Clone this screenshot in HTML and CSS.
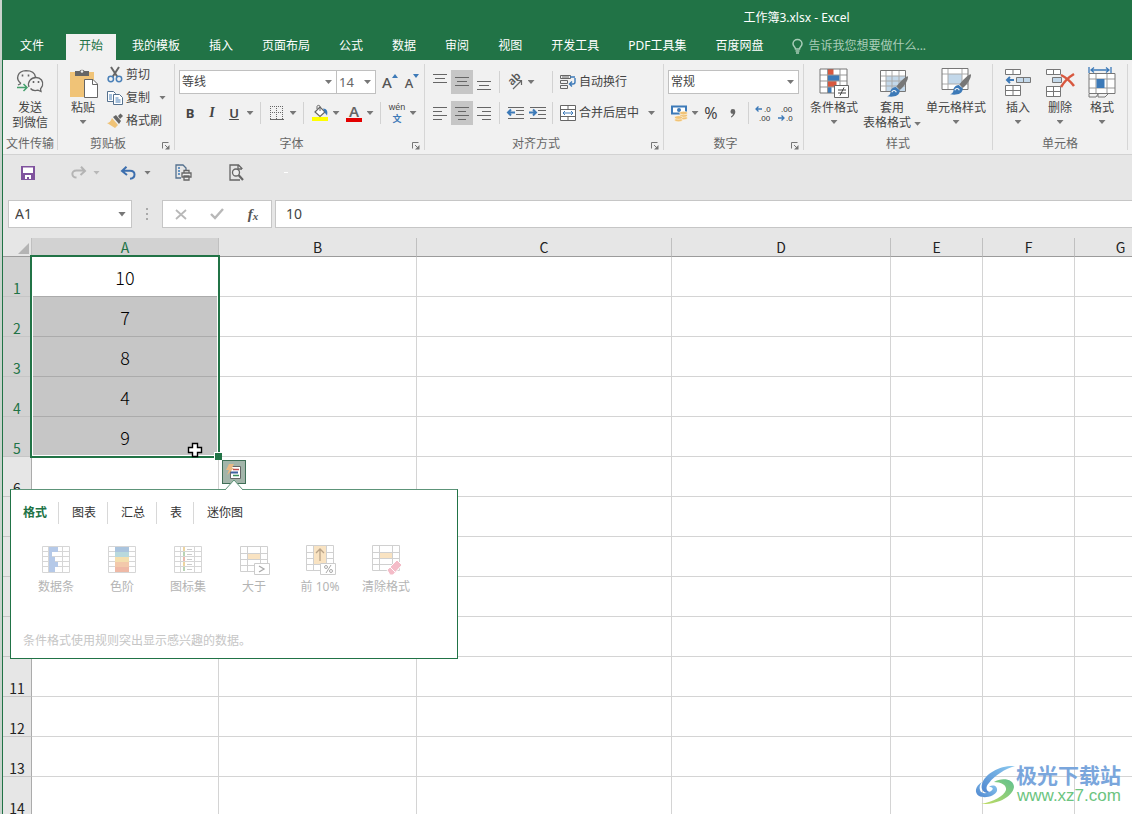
FILE: index.html
```html
<!DOCTYPE html>
<html lang="zh-CN">
<head>
<meta charset="utf-8">
<title>工作簿3.xlsx - Excel</title>
<link rel="stylesheet" href="styles.css">
</head>
<body>
<svg class="defs" aria-hidden="true">
  <symbol id="launcher" viewBox="0 0 8 8"><path d="M.5 6.500V.5H6.500M3 3l3 3" fill="none" stroke="#777"/><path d="M7.500 3v4.500H3z" fill="#777"/></symbol>
  <symbol id="brush" viewBox="0 0 20 20"><path d="M19 1c1 2-3 9-7 12l-3-3C12 6 17 1 19 1z" fill="#777"/><path d="M8.500 10.500l3.500 3c0 5-6 6-11 5 3-1 3-3 3-5 1-2 3-3 4.500-3z" fill="#3d7ab8"/><path d="M5 15c1-2 3-2 4 0" stroke="#fff" fill="none"/></symbol>
</svg>
<div class="app">
  <header class="titlebar"><h1>工作簿3.xlsx - Excel</h1></header>
  <nav class="tabs">
    <button class="file">文件</button>
    <button class="active">开始</button>
    <button>我的模板</button>
    <button>插入</button>
    <button>页面布局</button>
    <button>公式</button>
    <button>数据</button>
    <button>审阅</button>
    <button>视图</button>
    <button>开发工具</button>
    <button>PDF工具集</button>
    <button>百度网盘</button>
    <button class="tell"><svg width="11" height="15" viewBox="0 0 11 15" fill="none" stroke="#a9cdb8" stroke-width="1.500"><path d="M3.500 10C3.500 8 1 7.500 1 4.800a4.400 4.200 0 0 1 9 0C10 7.500 7.500 8 7.500 10zM3.500 12h4M4 14h3"/></svg>告诉我您想要做什么...</button>
  </nav>

  <section class="ribbon">
    <div class="group g-send">
      <div class="body">
        <button class="big">
          <svg width="28" height="30" viewBox="0 0 28 30" fill="none" stroke="#666" stroke-width="1.300"><path d="M5 15.500C-1 11 1.500 3 10 2.700c6 0 9 3 9.500 6.500M2 17l3-1.500"/><path d="M13 19c-2-5 2-9.500 7-9.500s7.500 4 6.500 8c-.5 1.500-1.500 2.500-2 3.300l.5 2.700-3-1.300c-3 .7-6 .3-7.500-1.700"/><path d="M6.500 6.500v2M12.500 6.500v2M17.500 13v2M22.500 13v2" stroke-width="1.600"/><path d="M1 19.500h10M7.500 16l3.500 3.500L7.500 23" stroke="#45a06c" stroke-width="1.500"/></svg>
          <span>发送</span><span>到微信</span>
        </button>
      </div>
      <div class="caption">文件传输</div>
    </div>
    <i class="divider"></i>

    <div class="group g-clip">
      <div class="body">
        <button class="big">
          <svg width="30" height="30" viewBox="0 0 30 30"><path d="M2 4h24v25H2z" fill="#f0c377"/><path d="M7 3h4.500a3 3 0 0 1 5 0H21v5H7z" fill="#666"/><circle cx="14" cy="3.500" r="1.300" fill="#f1f1f1"/><path d="M16.500 11.500h8.500l4.500 4.500v13.500h-13z" fill="#fff" stroke="#666"/><path d="M24.500 11.500v5h5" fill="none" stroke="#666"/></svg>
          <span>粘贴</span><i class="caret"></i>
        </button>
        <div class="stack">
          <button class="small"><svg width="16" height="16" viewBox="0 0 16 16" fill="none"><path d="M4 0l6.500 10M12 0L5.500 10" stroke="#666" stroke-width="2"/><circle cx="3.800" cy="12" r="2.700" stroke="#4a80b8" stroke-width="1.500"/><circle cx="12" cy="12" r="2.700" stroke="#4a80b8" stroke-width="1.500"/></svg>剪切</button>
          <button class="small"><svg width="16" height="16" viewBox="0 0 16 16"><g fill="#fff" stroke="#55718e"><path d="M.5 1.500h6l2 2v8h-8z"/><path d="M6.500 4.500h6l3 3v7h-9z"/></g><path d="M2 5h3M2 7h3M2 9h3M8.500 8h3M8.500 10h5M8.500 12h5" stroke="#4a80b8"/></svg>复制<i class="caret far"></i></button>
          <button class="small"><svg width="16" height="16" viewBox="0 0 16 16"><path d="M11 3l2.500-2.500L16 3l-3 3z" fill="#666"/><path d="M6 4l3-2 5 6-2 3z" fill="#666"/><path d="M5 5l6 7-3 3-8-5c2 0 4-2 5-5z" fill="#f0c377"/></svg>格式刷</button>
        </div>
      </div>
      <div class="caption">剪贴板</div>
      <button class="launch" aria-label="剪贴板选项"><svg width="8" height="8"><use href="#launcher"/></svg></button>
    </div>
    <i class="divider"></i>

    <div class="group g-font">
      <div class="body rows">
        <div class="row">
          <label class="combo font"><select aria-label="字体"><option>等线</option></select><i class="caret"></i></label>
          <label class="combo size"><select aria-label="字号"><option>14</option></select><i class="caret"></i></label>
          <button class="tool grow" aria-label="增大字号"><span class="biga">A</span><svg width="6" height="4"><path d="M0 4l3-4 3 4z" fill="#3d7ab8"/></svg></button>
          <button class="tool grow" aria-label="减小字号"><span class="smalla">A</span><svg width="6" height="4"><path d="M0 0l3 4 3-4z" fill="#3d7ab8"/></svg></button>
        </div>
        <div class="row">
          <button class="tool"><b>B</b></button>
          <button class="tool"><em>I</em></button>
          <button class="tool"><u>U</u></button>
          <button class="drop" aria-label="下划线"><i class="caret"></i></button>
          <i class="bar"></i>
          <button class="tool" aria-label="边框"><svg width="14" height="14" viewBox="0 0 14 14" fill="none" stroke="#666"><path d="M0 .5h14M0 6.500h14M.5 0v13M6.500 0v13M12.500 0v13" stroke-dasharray="1 1"/><path d="M0 13.500h14"/></svg></button>
          <button class="drop" aria-label="边框选项"><i class="caret"></i></button>
          <i class="bar"></i>
          <button class="tool" aria-label="填充颜色"><svg width="16" height="16" viewBox="0 0 16 16"><path d="M0 12h16v4H0z" fill="#ff0"/><path d="M3 7l5-5 5 5-5 4.500z" fill="#fff" stroke="#666" stroke-width="1.200"/><path d="M5 4V1.500C5 0 8 0 8 1.500V6" stroke="#666" fill="none"/><path d="M11 3.500c4 0 5 3 4 7l-2-2.500z" fill="#3d7ab8"/></svg></button>
          <button class="drop" aria-label="填充颜色选项"><i class="caret"></i></button>
          <button class="tool color" aria-label="字体颜色"><span>A</span></button>
          <button class="drop" aria-label="字体颜色选项"><i class="caret"></i></button>
          <i class="bar"></i>
          <button class="tool pinyin"><span>wén</span><strong>文</strong></button>
          <button class="drop" aria-label="拼音选项"><i class="caret"></i></button>
        </div>
      </div>
      <div class="caption">字体</div>
      <button class="launch" aria-label="字体选项"><svg width="8" height="8"><use href="#launcher"/></svg></button>
    </div>
    <i class="divider"></i>

    <div class="group g-align">
      <div class="body rows">
        <div class="row">
          <button class="tool" aria-label="顶端对齐"><svg width="14" height="18" stroke="#666"><path d="M0 1.500h14M2 5.500h10M0 9.500h14"/></svg></button>
          <button class="tool on" aria-label="垂直居中"><svg width="14" height="18" stroke="#666"><path d="M0 4.500h14M2 8.500h10M0 12.500h14"/></svg></button>
          <button class="tool" aria-label="底端对齐"><svg width="14" height="18" stroke="#666"><path d="M0 8.500h14M2 12.500h10M0 16.500h14"/></svg></button>
          <i class="bar"></i>
          <button class="tool" aria-label="方向"><svg width="18" height="18" viewBox="0 0 18 18"><text class="orient" transform="translate(6 13) rotate(-45)">ab</text><path d="M7 16l8-8M11 7.500h4.500V12" fill="none" stroke="#666" stroke-width="1.200"/></svg></button>
          <button class="drop" aria-label="方向选项"><i class="caret"></i></button>
          <i class="bar late"></i>
          <button class="small"><svg width="16" height="16" viewBox="0 0 16 16" fill="none" stroke="#666"><path d="M.5 1.500h10v3H.5zM.5 6.500h7v3h-7zM.5 11.500h7v3h-7zM2 3h7"/><path d="M10 3h5M15 4v4q0 2-2 2h-3M12 7.500L9.500 10l2.500 2.500" stroke="#3d7ab8" stroke-width="1.400"/></svg>自动换行</button>
        </div>
        <div class="row">
          <button class="tool" aria-label="左对齐"><svg width="14" height="14" stroke="#666"><path d="M0 1.500h14M0 5.500h9M0 9.500h14M0 13.500h9"/></svg></button>
          <button class="tool on" aria-label="居中"><svg width="14" height="14" stroke="#666"><path d="M0 1.500h14M3 5.500h8M0 9.500h14M3 13.500h8"/></svg></button>
          <button class="tool" aria-label="右对齐"><svg width="14" height="14" stroke="#666"><path d="M0 1.500h14M5 5.500h9M0 9.500h14M5 13.500h9"/></svg></button>
          <i class="bar"></i>
          <button class="tool" aria-label="减少缩进"><svg width="17" height="14" fill="none" stroke="#666"><path d="M1 1.500h16M9 4.500h8M9 8.500h8M1 12.500h16"/><path d="M8 6.500H1M4 3.500L1 6.500l3 3" stroke="#3d7ab8" stroke-width="2"/></svg></button>
          <button class="tool" aria-label="增加缩进"><svg width="17" height="14" fill="none" stroke="#666"><path d="M1 1.500h16M9 4.500h8M9 8.500h8M1 12.500h16"/><path d="M0 6.500h7M4 3.500l3 3-3 3" stroke="#3d7ab8" stroke-width="2"/></svg></button>
          <i class="bar"></i>
          <button class="small"><svg width="16" height="16" viewBox="0 0 16 16" fill="#fff" stroke="#666"><path d="M.5.5h15v15H.5zM.5 4.500h15M.5 11.500h15M8 .5v4M8 11.500v4"/><path d="M3 8h10M5 6L3 8l2 2M11 6l2 2-2 2" fill="none" stroke="#3d7ab8"/></svg>合并后居中<i class="caret far"></i></button>
        </div>
      </div>
      <div class="caption">对齐方式</div>
      <button class="launch" aria-label="对齐选项"><svg width="8" height="8"><use href="#launcher"/></svg></button>
    </div>
    <i class="divider"></i>

    <div class="group g-num">
      <div class="body rows">
        <div class="row">
          <label class="combo wide"><select aria-label="数字格式"><option>常规</option></select><i class="caret"></i></label>
        </div>
        <div class="row">
          <button class="tool" aria-label="会计格式"><svg width="17" height="17" viewBox="0 0 17 17"><path d="M1 1.500h14v7H1z" fill="#fff" stroke="#3d7ab8" stroke-width="2"/><circle cx="8" cy="5" r="2" fill="#3d7ab8"/><g fill="#f0c377" stroke="#fff" stroke-width=".5"><ellipse cx="12.500" cy="13" rx="4" ry="1.800"/><ellipse cx="12.500" cy="10.500" rx="4" ry="1.800"/><ellipse cx="12.500" cy="8" rx="4" ry="1.800"/><ellipse cx="7.500" cy="15" rx="4" ry="1.800"/><ellipse cx="7.500" cy="12.500" rx="4" ry="1.800"/></g></svg></button>
          <button class="drop" aria-label="会计格式选项"><i class="caret"></i></button>
          <button class="tool pct">%</button>
          <button class="tool" aria-label="千位分隔"><svg width="6" height="9" viewBox="0 0 6 9"><path d="M.5 2.500a2.200 2.200 0 0 1 4.800 0C5.500 5 3 8 1 8.500V7.500C2.500 6.500 3 5.500 3 4.800 1.500 5 .5 4 .5 2.500z" fill="#666"/></svg></button>
          <i class="bar"></i>
          <button class="tool" aria-label="增加小数位"><svg class="dec" width="18" height="18" viewBox="0 0 18 18"><text x="9" y="8">.0</text><text x="4" y="17">.00</text><path d="M7 5H1M3.500 2.500L1 5l2.500 2.500"/></svg></button>
          <button class="tool" aria-label="减少小数位"><svg class="dec" width="18" height="18" viewBox="0 0 18 18"><text x="4" y="8">.00</text><text x="9" y="17">.0</text><path d="M1 14h6M4.500 11.500L7 14l-2.500 2.500"/></svg></button>
        </div>
      </div>
      <div class="caption">数字</div>
      <button class="launch" aria-label="数字选项"><svg width="8" height="8"><use href="#launcher"/></svg></button>
    </div>
    <i class="divider"></i>

    <div class="group g-style">
      <div class="body">
        <button class="big">
          <svg width="30" height="30" viewBox="0 0 30 30"><path d="M1 1h27v24H1z" fill="#fff"/><path d="M8.500 1h6v6h-6z" fill="#d8583f"/><path d="M8.500 7h12v6h-12z" fill="#3d7ab8"/><path d="M8.500 13h9v6h-9z" fill="#d8583f"/><path d="M8.500 19h4v6h-4z" fill="#3d7ab8"/><path d="M1 7h27M1 13h27M1 19h27M8.500 1v24M21 1v24" stroke="#999" fill="none"/><path d="M1 1h27v24H1z" fill="none" stroke="#777"/><path d="M15.500 17.500h14v12h-14z" fill="#fff" stroke="#666"/><path d="M19 22h8M19 25h8M25 19.500l-4 8" stroke="#444" fill="none"/></svg>
          <span>条件格式</span><i class="caret"></i>
        </button>
        <button class="big mid">
          <svg width="30" height="32" viewBox="0 0 30 32"><path d="M3.500 3.500h25v21h-25z" fill="#fff"/><path d="M9 9h19v15H9z" fill="#c3d8ea"/><path d="M3 9h25M3 14h25M3 19h25M9 3v21M15 3v21M22 3v21" stroke="#aaa"/><path d="M3.500 3.500h25v21h-25z" fill="none" stroke="#777"/><use href="#brush" x="9" y="8" width="23" height="23"/></svg>
          <span>套用</span><span>表格格式<i class="caret"></i></span>
        </button>
        <button class="big wide">
          <svg width="30" height="32" viewBox="0 0 30 32"><path d="M1 1.500h26v21H1z" fill="#fff"/><path d="M7 7h14v10H7z" fill="#c3d8ea"/><path d="M1 7h26M1 17h26M7 1v21M21 1v21" stroke="#aaa"/><path d="M1 1.500h26v21H1z" fill="none" stroke="#777"/><use href="#brush" x="8" y="6" width="23" height="23"/></svg>
          <span>单元格样式</span><i class="caret"></i>
        </button>
      </div>
      <div class="caption">样式</div>
    </div>
    <i class="divider"></i>

    <div class="group g-cell">
      <div class="body">
        <button class="big">
          <svg width="28" height="30" viewBox="0 0 28 30" fill="#fff" stroke="#777"><path d="M1.500 1.500h15v5h-15zM9 1.500v5M1.500 17.500h15v10h-15zM9 17.500v10M1.500 22.500h15"/><path d="M12.500 9.500h14v5h-14zM19.500 9.500v5" fill="#c3d8ea"/><path d="M10 12H3M6 9l-3 3 3 3" fill="none" stroke="#3d7ab8" stroke-width="2"/></svg>
          <span>插入</span><i class="caret"></i>
        </button>
        <button class="big">
          <svg width="30" height="30" viewBox="0 0 30 30" fill="#fff" stroke="#777"><path d="M1.500 1.500h14v5h-14zM8.500 1.500v5M1.500 18.500h14v10h-14zM8.500 18.500v10M1.500 23.500h14"/><path d="M7.500 9.500h9v5h-9z" fill="#c3d8ea"/><path d="M16 7c4 2 10 7 13 11M29 6c-5 3-10 8-13 13" fill="none" stroke="#d8583f" stroke-width="2.500"/></svg>
          <span>删除</span><i class="caret"></i>
        </button>
        <button class="big">
          <svg width="28" height="32" viewBox="0 0 28 32" fill="none"><path d="M1 0v6M23 0v6M3 3h18M6 .5L3 3l3 2.500M18 .5L21 3l-3 2.500" stroke="#3d7ab8" stroke-width="1.300"/><path d="M1 6.500h26v20H1z" fill="#fff"/><path d="M1 12h26M1 21h26M8 6v20M19 6v20" stroke="#999"/><path d="M1 6.500h26v20H1zM1 27v3h7l2-3M10 27v3h7l3-3" stroke="#777"/><path d="M8.500 12h8v9h-8z" fill="#3d7ab8"/></svg>
          <span>格式</span><i class="caret"></i>
        </button>
      </div>
      <div class="caption">单元格</div>
    </div>
    <i class="divider"></i>
  </section>

  <div class="quick">
    <button aria-label="保存"><svg width="14" height="14" viewBox="0 0 14 14"><path d="M0 0h14v14H0z" fill="#80539e"/><path d="M2 1.500h10V7H2zM4 9h6v4H8v-2H6v2H4z" fill="#fff"/></svg></button>
    <button class="redo" aria-label="重做"><svg width="15" height="13" viewBox="0 0 15 13" fill="none" stroke="#b4b4b4" stroke-width="2"><path d="M10 0.700L14 5l-4.500 4M14 4.500H5.500c-6 0-5 7 0 7"/></svg><i class="caret pale"></i></button>
    <button class="undo" aria-label="撤消"><svg width="15" height="14" viewBox="0 0 15 14" fill="none" stroke="#3d6fae" stroke-width="2"><path d="M5.500 .7L1 5l5 4M1.500 4.800H9c6 0 6 7.500 0 8"/></svg><i class="caret"></i></button>
    <button class="print" aria-label="快速打印"><svg width="17" height="17" viewBox="0 0 17 17" fill="none" stroke="#666" stroke-width="1.300"><path d="M6 14H1V1h7l3 3v2" stroke="#55718e"/><path d="M3 4h2M3 7h2M3 10h2" stroke="#3d7ab8"/><path d="M7 9h9v4H7zM9 9V6.500h5V9M9 12h5v4H9z" fill="#eee"/></svg></button>
    <button class="view" aria-label="打印预览"><svg width="15" height="17" viewBox="0 0 15 17" fill="none" stroke="#666" stroke-width="1.300"><path d="M13 5v-.5L9.500 1H1v15h10M9 1v4h4"/><circle cx="7" cy="8.500" r="3.500" fill="#eee"/><path d="M9.500 11l4.500 5" stroke-width="2.200"/></svg></button>
    <i class="dash"></i>
  </div>

  <div class="formula">
    <label class="name"><input aria-label="名称框" value="A1"><i class="caret"></i></label>
    <span class="dots"><i></i><i></i><i></i></span>
    <div class="entry">
      <button aria-label="取消"><svg width="12" height="11" stroke="#b8b8b8" stroke-width="1.800"><path d="M1 1l10 9M11 1L1 10"/></svg></button>
      <button aria-label="输入"><svg width="14" height="12" fill="none" stroke="#b8b8b8" stroke-width="2.400"><path d="M1 6l4 4L13 1"/></svg></button>
      <button class="fx"><span>f</span><sub>x</sub></button>
    </div>
    <input class="value" aria-label="编辑栏" value="10">
  </div>

  <main class="sheet">
    <table>
      <colgroup><col class="c-row"><col class="c-a"><col class="c-b"><col class="c-c"><col class="c-d"><col class="c-e"><col class="c-e"><col class="c-e"></colgroup>
      <thead><tr><th class="corner"><svg width="11" height="11"><path d="M11 0v11H0z" fill="#b4b4b4"/></svg></th><th class="sel">A</th><th>B</th><th>C</th><th>D</th><th>E</th><th>F</th><th>G</th></tr></thead>
      <tbody>
        <tr class="sel first"><th>1</th><td>10</td><td></td><td></td><td></td><td></td><td></td><td></td></tr>
        <tr class="sel"><th>2</th><td>7</td><td></td><td></td><td></td><td></td><td></td><td></td></tr>
        <tr class="sel"><th>3</th><td>8</td><td></td><td></td><td></td><td></td><td></td><td></td></tr>
        <tr class="sel"><th>4</th><td>4</td><td></td><td></td><td></td><td></td><td></td><td></td></tr>
        <tr class="sel"><th>5</th><td>9</td><td></td><td></td><td></td><td></td><td></td><td></td></tr>
        <tr><th>6</th><td></td><td></td><td></td><td></td><td></td><td></td><td></td></tr>
        <tr><th></th><td></td><td></td><td></td><td></td><td></td><td></td><td></td></tr>
        <tr><th></th><td></td><td></td><td></td><td></td><td></td><td></td><td></td></tr>
        <tr><th></th><td></td><td></td><td></td><td></td><td></td><td></td><td></td></tr>
        <tr><th></th><td></td><td></td><td></td><td></td><td></td><td></td><td></td></tr>
        <tr><th>11</th><td></td><td></td><td></td><td></td><td></td><td></td><td></td></tr>
        <tr><th>12</th><td></td><td></td><td></td><td></td><td></td><td></td><td></td></tr>
        <tr><th>13</th><td></td><td></td><td></td><td></td><td></td><td></td><td></td></tr>
        <tr><th>14</th><td></td><td></td><td></td><td></td><td></td><td></td><td></td></tr>
      </tbody>
    </table>
    <div class="selection"></div>
    <svg class="cursor" width="16" height="16" viewBox="0 0 16 16"><path d="M5.500 1.500h5v4h4v5h-4v4h-5v-4h-4v-5h4z" fill="#fff" stroke="#000" stroke-width="1.400"/></svg>
    <button class="analysis" aria-label="快速分析"><svg width="18" height="18" viewBox="0 0 18 18"><path d="M5.500 3.500h10v12h-10z" fill="#fff" stroke="#666"/><path d="M8 6.500h6" stroke="#c0504d" stroke-width="1.500"/><path d="M6 9.500h7" stroke="#3d5f9e" stroke-width="2"/><path d="M8 12.500h6" stroke="#3b8f5c" stroke-width="1.500"/><path d="M4 1h5L7 5h2l-7 7 2-5H1z" fill="#e9b985"/></svg></button>
    <section class="popup">
      <svg class="arrow" width="20" height="11" viewBox="0 0 20 11"><path d="M1 11L10 1l9 10" fill="#fff" stroke="#5d9479"/></svg>
      <nav><button class="active">格式</button><button>图表</button><button>汇总</button><button>表</button><button>迷你图</button></nav>
      <div class="choices">
        <button><svg width="32" height="32" viewBox="0 0 32 32"><path d="M2.500 3.500h27v26h-27zM2 8.500h27M2 13.500h27M2 18.500h27M2 23.500h27M8.500 3v26M22.500 3v26" fill="#fff" stroke="#d6d6d6"/><path d="M9 4h9v5H9zM9 9h3v5H9zM9 14h6v5H9zM9 19h9v5H9zM9 24h6v5H9z" fill="#b5c9e8"/></svg><span>数据条</span></button>
        <button><svg width="32" height="32" viewBox="0 0 32 32"><path d="M2.500 3.500h27v26h-27zM2 8.500h27M2 13.500h27M2 18.500h27M2 23.500h27" fill="#fff" stroke="#d6d6d6"/><path d="M9 4h14v5H9z" fill="#aac4de"/><path d="M9 9h14v5H9z" fill="#b9d9dd"/><path d="M9 14h14v5H9z" fill="#f4dfae"/><path d="M9 19h14v5H9z" fill="#f3c9ab"/><path d="M9 24h14v5H9z" fill="#efb9a6"/></svg><span>色阶</span></button>
        <button><svg width="32" height="32" viewBox="0 0 32 32"><path d="M2.500 3.500h27v26h-27zM2 8.500h27M2 13.500h27M2 18.500h27M2 23.500h27M8.500 3v26M22.500 3v26" fill="#fff" stroke="#d6d6d6"/><path d="M12 4v4M12 19v4" stroke="#eed49f" stroke-width="2"/><path d="M12 9v4M12 24v4" stroke="#b9d4b4" stroke-width="2"/><path d="M12 14v4" stroke="#ecb9ae" stroke-width="2"/><path d="M15 6.500h5M15 11.500h5M15 16.500h5M15 21.500h5M15 26.500h5" stroke="#ccc"/></svg><span>图标集</span></button>
        <button><svg width="32" height="32" viewBox="0 0 32 32"><path d="M2.500 3.500h27v25h-27zM2 10.500h27M2 16.500h27M2 22.500h27M9.500 3v25M22.500 3v25" fill="#fff" stroke="#d0d0d0"/><path d="M10 11h12v5H10z" fill="#f9e3c2"/><path d="M16.500 20.500h15v11h-15z" fill="#fff" stroke="#ccc"/><path d="M21 23l5 3-5 3" fill="none" stroke="#aaa" stroke-width="1.300"/></svg><span>大于</span></button>
        <button><svg width="32" height="32" viewBox="0 0 32 32"><path d="M2.500 2.500h27v25h-27zM2 9.500h27M2 15.500h27M2 21.500h27M9.500 2v25M22.500 2v25" fill="#fff" stroke="#d0d0d0"/><path d="M10 3h12v18H10z" fill="#f9e3c2"/><path d="M16 18V6M12 10l4-4 4 4" fill="none" stroke="#b9a489" stroke-width="1.300"/><path d="M16.500 20.500h15v11h-15z" fill="#fff" stroke="#ccc"/><path d="M27 22l-5 8" stroke="#aaa"/><circle cx="22" cy="24" r="1.500" fill="none" stroke="#aaa"/><circle cx="27" cy="28" r="1.500" fill="none" stroke="#aaa"/></svg><span>前 10%</span></button>
        <button><svg width="32" height="32" viewBox="0 0 32 32"><path d="M2.500 2.500h27v25h-27zM2 9.500h27M2 15.500h27M2 21.500h27M9.500 2v25M22.500 2v25" fill="#fff" stroke="#d0d0d0"/><path d="M10 10h12v5H10z" fill="#f9e3c2"/><path d="M17 27l10-10 5 5-9 10h-3z" fill="#f4bcc8" stroke="#fff"/><path d="M20 24l5 5" stroke="#fff"/></svg><span>清除格式</span></button>
      </div>
      <p>条件格式使用规则突出显示感兴趣的数据。</p>
    </section>
  </main>

  <a class="brand" href="#">
    <svg width="42" height="40" viewBox="0 0 42 40"><defs><linearGradient id="blue" x1="0" y1="1" x2="1" y2="0"><stop offset="0" stop-color="#4f86cf"/><stop offset="1" stop-color="#8ccaf0"/></linearGradient><linearGradient id="green" x1="0" y1="1" x2="1" y2="0"><stop offset="0" stop-color="#c3dd62"/><stop offset="1" stop-color="#5fc08f"/></linearGradient></defs><path d="M41 1C27 0 11 8 8 19c-2 7 4 11 9 8-5 0-6-5-2-9C21 10 31 4 41 1z" fill="url(#blue)"/><path d="M8 17C1 21 0 28 5 31c6 3 16 0 18-5 1-5-4-7-8-4 4 0 5 2 2 4-4 3-10 3-11-1-1-3 0-5 2-8z" fill="url(#blue)"/><path d="M20 17c8-5 20-3 20 5-1 9-16 18-33 17 12-2 23-8 25-14 1-5-5-8-12-8z" fill="url(#green)"/></svg>
    <span><strong>极光下载站</strong><small>www.xz7.com</small></span>
  </a>
</div>
</body>
</html>
```
FILE: styles.css
```css
* { box-sizing: border-box; }
body { margin: 0; height: 100vh; overflow: hidden; background: #c9d3cd; font: 12px/16px "Noto Sans", "Noto Sans CJK SC", sans-serif; color: #444; }
button, input, select { font: inherit; color: inherit; border: 0; padding: 0; margin: 0; background: none; border-radius: 0; outline: 0; }
button { display: flex; align-items: center; justify-content: center; white-space: nowrap; }
select { appearance: none; width: 100%; }
svg { display: block; flex: none; overflow: visible; }
.defs { position: absolute; width: 0; height: 0; }
i { font-style: normal; }
.app { position: relative; display: flex; flex-direction: column; height: 100vh; margin-left: 2px; border-left: 1px solid #217346; background: #e6e6e6; overflow: hidden; }

.titlebar { background: #217346; height: 34px; padding: 10px 0 0 458px; text-align: center; color: #fff; flex: none; }
.titlebar h1 { margin: 0; font-size: 12px; line-height: 16px; font-weight: 400; }
.tabs { display: flex; gap: 3px; height: 26px; padding-left: 4px; background: #217346; color: #fff; flex: none; }
.tabs button { padding: 0 13px 2px; }
.tabs .file { margin-right: 6px; }
.tabs .active { background: #f1f1f1; color: #217346; }
.tabs .tell { gap: 5px; color: #a9cdb8; }

.caret { flex: none; width: 7px; height: 4px; background: #777; clip-path: polygon(0 0, 100% 0, 50% 100%); }
.pale { background: #b8b8b8; }
.ribbon { display: flex; flex: none; background: #f1f1f1; border-bottom: 1px solid #d2d2d2; }
.divider { flex: none; width: 1px; margin: 4px 0; background: #d6d6d6; }
.group { position: relative; flex: none; display: flex; flex-direction: column; padding-bottom: 1px; }
.body { display: flex; justify-content: center; height: 75px; }
.caption { height: 18px; line-height: 18px; text-align: center; color: #666; white-space: nowrap; }
.launch { position: absolute; right: 4px; bottom: 4px; }
.g-send { width: 54px; }
.g-clip { width: 116px; }
.g-font { width: 249px; }
.g-align { width: 238px; }
.g-num { width: 139px; }
.g-clip .caption, .g-font .caption, .g-align .caption, .g-num .caption { padding-right: 16px; }
.g-style { width: 188px; }
.g-cell { width: 134px; }

.big { flex-direction: column; justify-content: flex-start; width: 42px; padding-top: 6px; line-height: 15px; }
.big svg { height: 34px; }
.big > .caret { margin-top: 5px; }
.big span .caret { display: inline-block; vertical-align: middle; margin-left: 3px; }
.g-style .big { width: 56px; }
.g-style .big.mid { width: 60px; }
.g-style .big.wide { width: 68px; }
.g-clip .body { justify-content: flex-start; padding-left: 4px; }
.stack { display: flex; flex-direction: column; padding: 3px 0 0 2px; }
.small { justify-content: flex-start; gap: 3px; height: 23px; padding-left: 1px; }
.far { margin-left: 6px; }
.row .small { padding-left: 3px; }

.rows { flex-direction: column; justify-content: flex-start; gap: 7px; padding: 10px 0 0 4px; }
.row { display: flex; align-items: center; height: 24px; }
.tool { width: 22px; height: 24px; flex: none; }
.tool.on { background: #c6c6c6; }
.drop { width: 10px; height: 24px; flex: none; }
.bar { width: 1px; height: 22px; margin: 0 4px; background: #d2d2d2; flex: none; }
.bar.late { margin-left: 16px; }
.g-font .bar { margin: 0 5px; }
.combo { position: relative; display: flex; align-items: center; height: 24px; background: #fff; border: 1px solid #c0c0c0; padding: 0 4px 0 2px; }
.combo select { flex: 1; min-width: 0; }
.combo.font { width: 158px; }
.combo.size { width: 40px; margin-left: -1px; font-size: 13px; color: #666; }
.combo.wide { width: 131px; }
.grow { align-items: flex-start; font-weight: 500; color: #555; line-height: 20px; }
.grow svg { margin-top: 4px; }
.combo.size + .grow { margin-left: 3px; }
.biga { font-size: 15px; padding-top: 2px; }
.smalla { font-size: 13px; padding-top: 3px; }
.tool b { font-size: 13px; }
.tool em { font: italic 700 14px/16px "Liberation Serif", serif; }
.tool u { font-size: 13px; font-weight: 600; }
.tool.color { margin-left: 2px; }
.color span { width: 16px; height: 17px; border-bottom: 4px solid #e30000; font-size: 15px; font-weight: 600; line-height: 13px; color: #666; }
.pinyin { flex-direction: column; font-size: 9px; line-height: 11px; font-family: "Liberation Sans", "Noto Sans CJK SC", sans-serif; }
.pinyin strong { font-size: 9px; line-height: 12px; color: #3d7ab8; }
.pct { font-size: 16px; }
.orient { font: 600 11px "Noto Sans", sans-serif; fill: #555; }
.dec text { font: 8px "Liberation Sans", sans-serif; fill: #333; }
.dec path { fill: none; stroke: #3d7ab8; stroke-width: 1.3; }

.quick { display: flex; align-items: center; flex: none; height: 35px; padding-left: 18px; }
.quick .redo { margin-left: 36px; gap: 7px; }
.quick .undo { margin-left: 21px; gap: 8px; }
.quick .print { margin-left: 24px; }
.quick .view { margin-left: 37px; }
.dash { width: 4px; height: 1px; margin-left: 40px; background: #fff; }
.formula { display: flex; flex: none; height: 48px; padding: 10px 0 10px 5px; }
.name { display: flex; align-items: center; width: 124px; padding: 0 5px 0 6px; background: #fff; border: 1px solid #c6c6c6; font-size: 14px; }
.name input { flex: 1; min-width: 0; }
.name .caret { width: 8px; height: 5px; }
.dots { display: flex; flex-direction: column; justify-content: center; gap: 3px; width: 30px; align-items: center; }
.dots i { width: 2px; height: 2px; background: #aaa; }
.entry { display: flex; justify-content: space-around; width: 110px; background: #fff; border: 1px solid #c6c6c6; }
.entry button { width: 36px; }
.fx { font: italic 700 15px/20px "Liberation Serif", serif; color: #555; }
.fx sub { font-size: 11px; line-height: 10px; vertical-align: baseline; margin-top: 4px; }
.value { flex: 1; min-width: 0; margin-left: 3px; padding-left: 10px; background: #fff; border: 1px solid #c6c6c6; border-right: 0; font-size: 14px; }

.sheet { position: relative; flex: 1; min-height: 0; overflow: hidden; background: #fff; }
table { table-layout: fixed; width: 1164px; border-collapse: separate; border-spacing: 0; }
.c-row { width: 29px; }
.c-a { width: 187px; }
.c-b { width: 198px; }
.c-c { width: 255px; }
.c-d { width: 219px; }
.c-e { width: 92px; }
th { padding: 0; font: 400 14px/18px "Noto Sans CJK SC", sans-serif; color: #222; background: #e6e6e6; }
thead th { height: 19px; border-right: 1px solid #c0c0c0; border-bottom: 1px solid #9b9b9b; }
thead .sel { background: #d2d2d2; color: #217346; }
.corner svg { margin: 3px 0 0 15px; }
tbody th { height: 40px; vertical-align: bottom; border-right: 1px solid #ababab; border-bottom: 1px solid #c6c6c6; line-height: 16px; }
tbody .sel th { background: #d2d2d2; color: #217346; }
td { padding: 0; text-align: center; border-right: 1px solid #d4d4d4; border-bottom: 1px solid #d4d4d4; font: 300 18px/20px "Noto Sans CJK SC", sans-serif; color: #000; }
.sel td:nth-child(2) { background: #c6c6c6; border-bottom-color: #ababab; }
.first td:nth-child(2) { background: #fff; }
.selection { position: absolute; left: 27px; top: 17px; width: 190px; height: 203px; border: 2px solid #217346; box-shadow: inset 0 0 0 1px #fff; }
.selection::after { content: ""; position: absolute; right: -4px; bottom: -4px; width: 7px; height: 7px; background: #217346; border: 1px solid #fff; border-width: 1px 0 0 1px; }
.cursor { position: absolute; left: 184px; top: 204px; }
.analysis { position: absolute; left: 219px; top: 222px; width: 24px; height: 24px; background: #a3b5aa; border: 1px solid #3f6f57; }

.popup { position: absolute; left: 7px; top: 251px; width: 448px; height: 170px; border: 1px solid #217346; border-top-color: #5d9479; background: #fff; padding: 12px 12px; }
.arrow { position: absolute; left: 213px; top: -11px; }
.popup nav { display: flex; }
.popup nav button { height: 22px; padding: 0 11px 0 13px; border-right: 1px solid #d8d8d8; color: #333; }
.popup nav button:first-child { padding-left: 0; }
.popup nav button:last-child { border: 0; }
.popup nav .active { color: #217346; font-weight: 700; }
.choices { display: flex; padding-top: 19px; }
.choices button { flex-direction: column; width: 66px; gap: 4px; color: #b4b4b4; }
.popup p { margin: 38px 0 0; color: #c6c6c6; }

.brand { position: absolute; right: 11px; bottom: 8px; display: flex; align-items: center; text-decoration: none; }
.brand span { display: flex; flex-direction: column; }
.brand strong { font-size: 21px; line-height: 22px; font-weight: 700; color: #7aa6dc; }
.brand small { font: 17px/20px "Liberation Sans", sans-serif; color: #6cc480; padding-left: 1px; }
```
